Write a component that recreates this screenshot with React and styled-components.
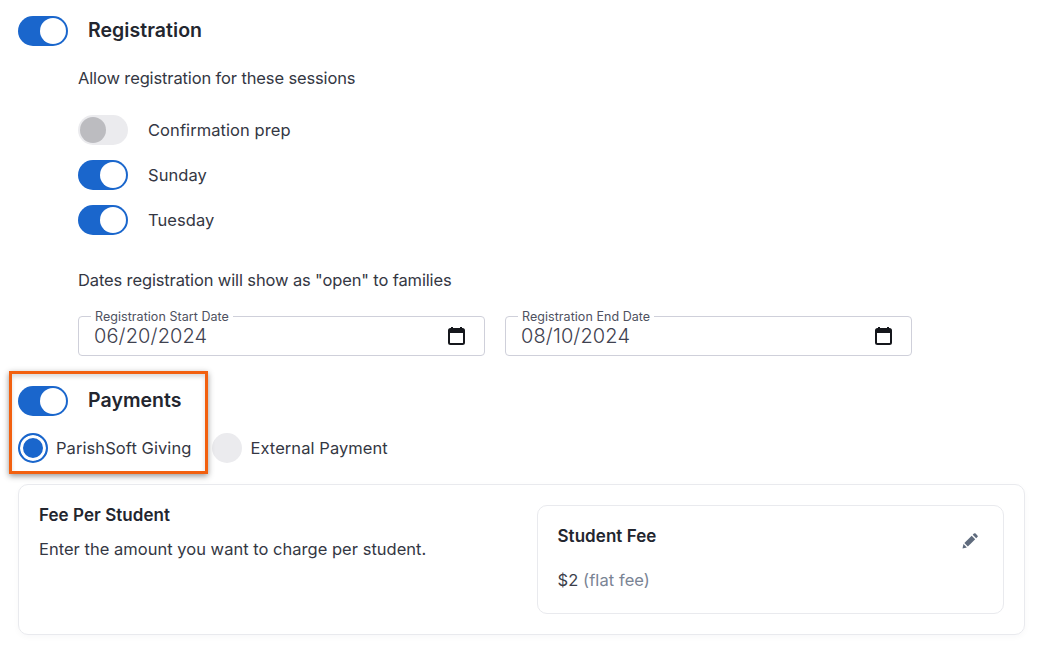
import React from "react";
import styled, { createGlobalStyle } from "styled-components";

const Global = createGlobalStyle`
  html, body { margin: 0; padding: 0; background: #fff; }
  body { font-family: "Inter", "Liberation Sans", sans-serif; color: #2b2e3a; }
`;

const Page = styled.div`
  position: relative;
  width: 1042px;
  height: 649px;
  overflow: hidden;
  padding: 16px 17px 0 18px;
  box-sizing: border-box;
`;

const HeaderRow = styled.div`
  display: flex;
  align-items: center;
  gap: 20px;
  height: 30px;
`;

const Heading = styled.h2`
  margin: 0;
  padding-bottom: 2px;
  font-size: 19.5px;
  font-weight: 600;
  color: #23262f;
  letter-spacing: 0.05px;
`;

const Track = styled.span`
  position: relative;
  display: inline-block;
  flex: none;
  width: 50px;
  height: 30px;
  border-radius: 15px;
  background: ${(p) => (p.$on ? "#1a66cc" : "#ebebee")};
`;

const Knob = styled.span`
  position: absolute;
  top: 2px;
  left: ${(p) => (p.$on ? "22px" : "2px")};
  width: 26px;
  height: 26px;
  border-radius: 50%;
  background: ${(p) => (p.$on ? "#fff" : "#bcbcc0")};
`;

const Toggle = ({ on }) => (
  <Track $on={on}>
    <Knob $on={on} />
  </Track>
);

const Indented = styled.div`
  margin-left: 60px;
`;

const Prompt = styled.p`
  margin: ${(p) => p.$top || 0}px 0 0;
  height: 24px;
  line-height: 24px;
  font-size: 16.5px;
  color: #343743;
  letter-spacing: -0.13px;
`;

const SessionList = styled.div`
  display: flex;
  flex-direction: column;
  gap: 15px;
  margin: 25px 0 33px;
`;

const SessionRow = styled.div`
  display: flex;
  align-items: center;
  gap: 20px;
  height: 30px;
  font-size: 16.5px;
  letter-spacing: 0.07px;
  color: #343743;
`;

const DateRow = styled.div`
  display: flex;
  gap: 20px;
  margin-top: 24px;
  width: 834px;
`;

const DateField = styled.div`
  position: relative;
  flex: 1;
  height: 40px;
  box-sizing: border-box;
  border: 1px solid #cfd0da;
  border-radius: 4px;
  display: flex;
  align-items: center;
  justify-content: space-between;
  padding: 0 19px 0 15px;
`;

const FieldLabel = styled.span`
  position: absolute;
  top: -8px;
  left: 12px;
  padding: 0 4px;
  background: #fff;
  font-size: 12.5px;
  line-height: 15px;
  color: #4e5160;
  letter-spacing: 0.05px;
`;

const DateValue = styled.span`
  font-size: 20px;
  font-weight: 300;
  color: #3f4250;
  letter-spacing: 0.12px;
`;

const PaymentsHeader = styled(HeaderRow)`
  margin-top: 30px;
`;

const RadioRow = styled.div`
  display: flex;
  align-items: center;
  height: 30px;
  margin-top: 17px;
  font-size: 16.5px;
  letter-spacing: 0.07px;
  color: #343743;
`;

const Radio = styled.span`
  flex: none;
  box-sizing: border-box;
  width: 30px;
  height: 30px;
  border-radius: 50%;
  background: ${(p) => (p.$on ? "#1a66cc" : "#ebebee")};
  border: ${(p) => (p.$on ? "2px solid #1a66cc" : "none")};
  box-shadow: ${(p) => (p.$on ? "inset 0 0 0 3px #fff" : "none")};
  margin-right: ${(p) => (p.$on ? "8px" : "8.5px")};
`;

const RadioLabel = styled.span`
  margin-right: 20.5px;
`;

const FeeCard = styled.section`
  display: flex;
  justify-content: space-between;
  box-sizing: border-box;
  height: 151px;
  margin-top: 21px;
  padding: 20px;
  border: 1px solid #e9eaee;
  border-radius: 10px;
  box-shadow: 0 2px 6px rgba(30, 40, 70, 0.03);
`;

const FeeIntro = styled.div`
  display: flex;
  flex-direction: column;
`;

const FeeTitle = styled.h3`
  margin: 0;
  font-size: 17px;
  line-height: 20px;
  font-weight: 600;
  color: #23262f;
  letter-spacing: 0.05px;
`;

const FeeHint = styled.p`
  margin: 14px 0 0;
  font-size: 16.5px;
  line-height: 20px;
  color: #343743;
  letter-spacing: 0.02px;
`;

const FeeBox = styled.div`
  position: relative;
  box-sizing: border-box;
  width: 467px;
  height: 109px;
  padding: 20px 20px 20px 19.5px;
  border: 1px solid #e9eaee;
  border-radius: 10px;
`;

const BoxHead = styled.div`
  display: flex;
  justify-content: space-between;
  align-items: flex-start;
`;

const Amount = styled.p`
  margin: 21px 0 0;
  font-size: 16.5px;
  line-height: 20px;
  color: #3b3e4a;
  letter-spacing: 0.08px;
`;

const Muted = styled.span`
  color: #7a8494;
`;

const PencilButton = styled.span`
  display: block;
  width: 16px;
  height: 16px;
  margin: 7px 5px 0 0;
  color: #5f6b7d;
`;

const Highlight = styled.div`
  position: absolute;
  left: 9px;
  top: 371px;
  width: 199px;
  height: 103px;
  box-sizing: border-box;
  border: 3px solid #f2600f;
  box-shadow: 0 2px 6px rgba(0, 0, 0, 0.42), inset 0 3px 4px rgba(0, 0, 0, 0.14);
  pointer-events: none;
`;

const CalendarIcon = () => (
  <svg width="17" height="18" viewBox="0 0 17 18" fill="none">
    <path d="M4 0v2M13 0v2" stroke="#15171c" strokeWidth="2" />
    <rect x="1" y="2" width="15" height="15" rx="1.5" stroke="#15171c" strokeWidth="2" />
    <rect x="1" y="2" width="15" height="4" fill="#15171c" />
  </svg>
);

const PencilIcon = () => (
  <svg width="16" height="16" viewBox="0 0 16 16" fill="currentColor">
    <path d="M0.5 15.5l1-4.4 3.4 3.4z" />
    <path d="M2.4 10.1l7.3-7.3 3.5 3.5-7.3 7.3z" />
    <path d="M10.7 1.8l1.2-1.2a1.2 1.2 0 0 1 1.7 0l1.8 1.8a1.2 1.2 0 0 1 0 1.7l-1.2 1.2z" />
  </svg>
);

export default function App() {
  return (
    <Page>
      <Global />
      <HeaderRow>
        <Toggle on />
        <Heading>Registration</Heading>
      </HeaderRow>
      <Indented>
        <Prompt $top={20}>Allow registration for these sessions</Prompt>
        <SessionList>
          <SessionRow>
            <Toggle />
            Confirmation prep
          </SessionRow>
          <SessionRow>
            <Toggle on />
            Sunday
          </SessionRow>
          <SessionRow>
            <Toggle on />
            Tuesday
          </SessionRow>
        </SessionList>
        <Prompt>Dates registration will show as "open" to families</Prompt>
        <DateRow>
          <DateField>
            <FieldLabel>Registration Start Date</FieldLabel>
            <DateValue>06/20/2024</DateValue>
            <CalendarIcon />
          </DateField>
          <DateField>
            <FieldLabel>Registration End Date</FieldLabel>
            <DateValue>08/10/2024</DateValue>
            <CalendarIcon />
          </DateField>
        </DateRow>
      </Indented>
      <PaymentsHeader>
        <Toggle on />
        <Heading>Payments</Heading>
      </PaymentsHeader>
      <RadioRow>
        <Radio $on />
        <RadioLabel>ParishSoft Giving</RadioLabel>
        <Radio />
        <span>External Payment</span>
      </RadioRow>
      <FeeCard>
        <FeeIntro>
          <FeeTitle>Fee Per Student</FeeTitle>
          <FeeHint>Enter the amount you want to charge per student.</FeeHint>
        </FeeIntro>
        <FeeBox>
          <BoxHead>
            <FeeTitle>Student Fee</FeeTitle>
            <PencilButton>
              <PencilIcon />
            </PencilButton>
          </BoxHead>
          <Amount>
            $2 <Muted>(flat fee)</Muted>
          </Amount>
        </FeeBox>
      </FeeCard>
      <Highlight />
    </Page>
  );
}
